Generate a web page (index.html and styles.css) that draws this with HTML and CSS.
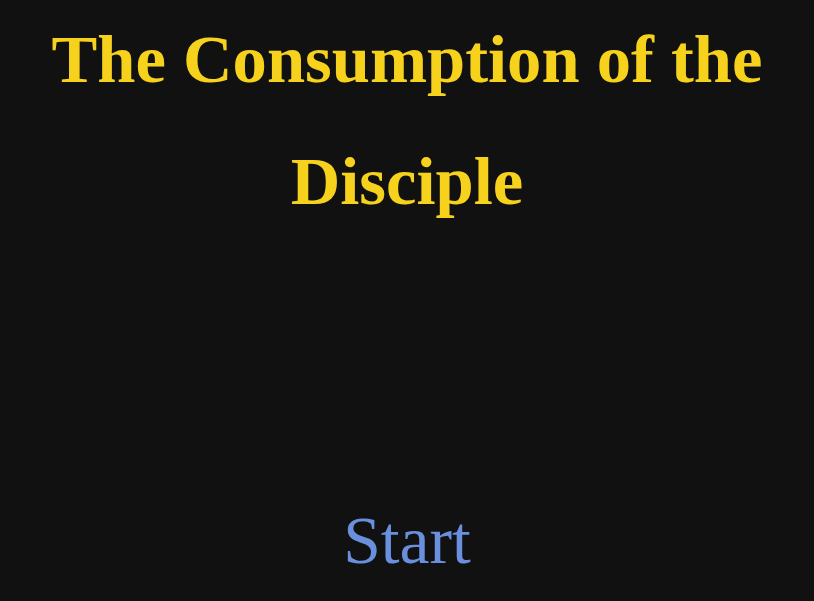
FILE: index.html
```html
<!DOCTYPE html>
<html lang="en">
<head>
<meta charset="utf-8">
<title>The Consumption of the Disciple</title>
<link rel="stylesheet" href="styles.css">
</head>
<body>
<main class="screen">
  <h1 class="title">The Consumption of the Disciple</h1>
  <a class="start" href="#">Start</a>
</main>
</body>
</html>
```
FILE: styles.css
```css
html, body {
  margin: 0;
  padding: 0;
  height: 100%;
  background: #111111;
}

.screen {
  box-sizing: border-box;
  height: 100%;
  display: flex;
  flex-direction: column;
  align-items: center;
  justify-content: space-between;
  padding: 0 40px 21px;
  font-family: "Liberation Serif", "Times New Roman", serif;
}

.title {
  margin: -2px 0 0;
  color: #f7d21c;
  font-size: 68.6px;
  font-weight: bold;
  line-height: 122px;
  text-align: center;
}

.start {
  color: #6a8fdd;
  font-size: 67.6px;
  text-decoration: none;
}
```
